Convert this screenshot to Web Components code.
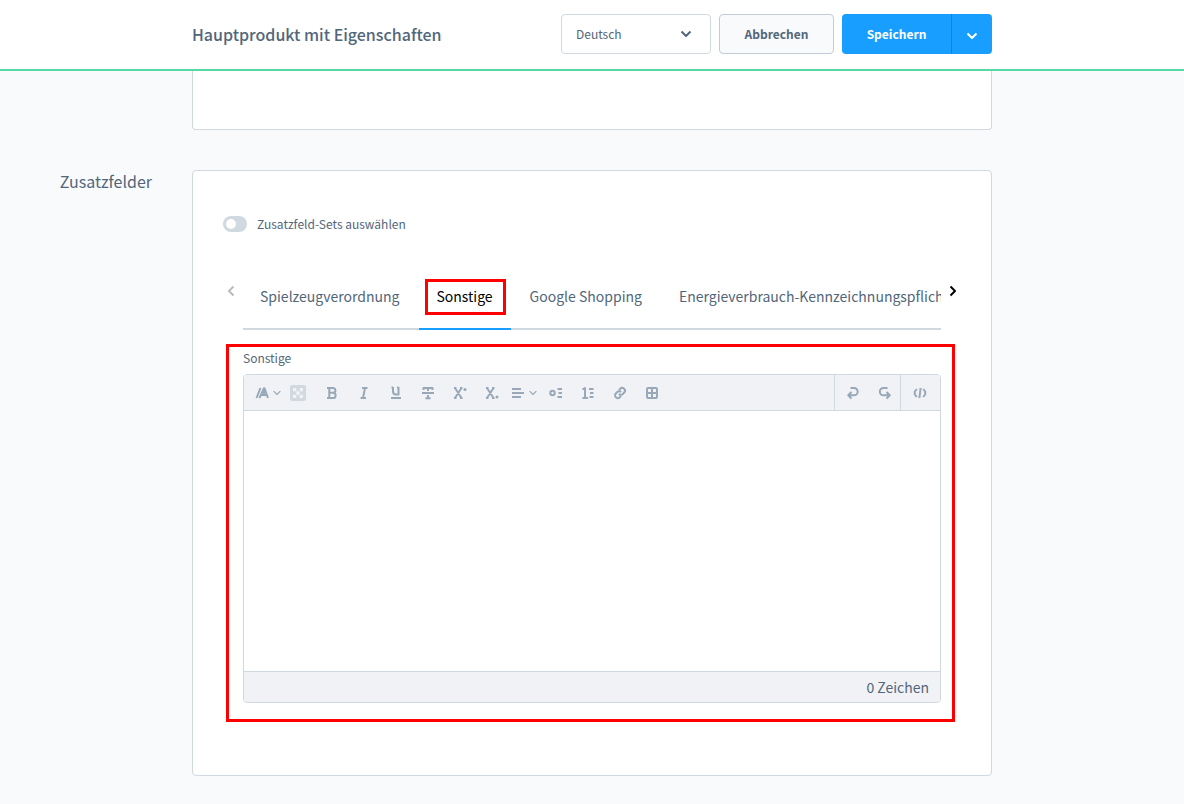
<!DOCTYPE html>
<html lang="de">
<head>
<meta charset="utf-8">
<title>Hauptprodukt mit Eigenschaften</title>
<style>
  body {
    margin: 0;
    min-height: 100vh;
    background: #f9fafc;
    color: #52667a;
    font: 14px/20px "Noto Sans CJK SC", "Noto Sans", sans-serif;
  }
</style>
</head>
<body>
<product-page></product-page>

<script>
const define = (name, html, setup) => {
  const template = document.createElement('template');
  template.innerHTML = '<style>*{box-sizing:border-box}button,select,textarea,input{font:inherit;color:inherit;margin:0}button{cursor:pointer}svg{display:block}</style>' + html;
  customElements.define(name, class extends HTMLElement {
    constructor() {
      super();
      const root = this.attachShadow({ mode: 'open' });
      root.append(template.content.cloneNode(true));
      if (setup) setup.call(this, root);
    }
  });
};

const icons = {
  font: '<path d="M2.500 13 6.500 3M5.500 13 10 3.200h.500L14 13M7.500 10h5.500M10 3.500V10"/>',
  color: '<g stroke="none" fill="#d1d9e0"><rect width="16" height="16" rx="2"/><path fill="#f0f2f5" d="M3 3h3.300v3.300H3zM9.700 3H13v3.300H9.700zM6.300 6.300h3.400v3.400H6.300zM3 9.700h3.300V13H3zM9.700 9.700H13V13H9.700z"/></g>',
  bold: '<path d="M3 3h6a2.300 2.300 0 0 1 0 4.800H5M9 7.800a2.600 2.600 0 0 1 0 5.200H3M5.300 3v10"/>',
  italic: '<path d="M6 3h5.500M4.500 13H10M9 3 7 13"/>',
  underline: '<path d="M5 2v4.500a3 3 0 0 0 3 3h2.500V2M3.500 2.500H5M9 2.500h1.500M3 13h10"/>',
  strike: '<path d="M3.500 5V3h9v2M8 3v3M2 8h12M8 10v3.500M5.500 13.200h5"/>',
  sup: '<path d="M3 3 9.500 13M9.500 3 3 13M2 3h2.500M8 3h2.500M2 13h2.500M8 13h2.500"/><circle cx="13" cy="4.500" r="1.500" fill="currentColor" stroke="none"/>',
  sub: '<path d="M3 3 9.500 13M9.500 3 3 13M2 3h2.500M8 3h2.500M2 13h2.500M8 13h2.500"/><circle cx="13" cy="12" r="1.500" fill="currentColor" stroke="none"/>',
  align: '<path d="M2 4h9M2 8h12M2 12h9"/>',
  bullets: '<circle cx="4.500" cy="8" r="2.200"/><path d="M9.500 4H14M10.500 8H14M9.500 12H14"/>',
  numbers: '<path d="M2.500 4.500 5 3v10M2.500 13h5.500M9 4h4.500M10 8h3.500M9.500 12h4"/>',
  link: '<path d="m7 5 1.200-1.200a2.500 2.500 0 0 1 4 3.700L10.500 9.200a2.400 2.400 0 0 1-3.500-.400M9 11l-1.200 1.200a2.500 2.500 0 0 1-4-3.700L5.500 6.800a2.400 2.400 0 0 1 3.500.400"/>',
  table: '<rect x="3" y="3" width="10" height="10" rx="1"/><path d="M8 3v10M3 8h10"/>',
  undo: '<path d="M6.500 3H10a3.600 3.600 0 0 1 0 7.300H4.500M7.500 7l-3.300 3.300 3.300 3.300"/>',
  redo: '<path d="M11.500 3H7.500a3.600 3.600 0 0 0 0 7.300H13M10.500 7l3.300 3.300-3.300 3.300"/>',
  code: '<path d="M4.800 4 2.800 6.500v3l2 2.500M11.200 4l2 2.500v3l-2 2.500M8.600 3l-1.200 10"/>',
  down: '<path d="m3.500 5.500 4.500 4.500 4.500-4.500"/>',
  left: '<path d="M10.500 3.500 6 8l4.500 4.500"/>',
  right: '<path d="m5.500 3.500 4.500 4.500-4.500 4.500"/>'
};
const svg = (name, size = 16, width = 2) =>
  `<svg width="${size}" height="${size}" viewBox="0 0 16 16" fill="none" stroke="currentColor" stroke-width="${width}" stroke-linejoin="round" aria-hidden="true">${icons[name]}</svg>`;

define('page-header', `
  <style>
    :host { display: grid; grid-template-columns: minmax(0,1fr) minmax(0,800px) minmax(0,1fr); background: #fff; border-bottom: 2px solid #57d9a3; }
    .bar { grid-column: 2; display: flex; align-items: center; gap: 8px; height: 69px; padding-bottom: 1px; }
    h1 { flex: 1; margin: 0; font-size: 16px; line-height: 24px; font-weight: 500; white-space: nowrap; }
  </style>
  <div class="bar"><h1><slot name="title"></slot></h1><slot></slot></div>`);

define('language-select', `
  <style>
    :host { display: block; position: relative; width: 150px; font-size: 12px; }
    select { appearance: none; display: block; width: 100%; height: 40px; padding: 0 14px; border: 1px solid #d1d9e0; border-radius: 4px; background: #fff; }
    svg { position: absolute; right: 17px; top: 12px; pointer-events: none; }
  </style>
  <select aria-label="Sprache"><option>Deutsch</option><option>English</option></select>${svg('down')}`);

define('action-button', `
  <style>
    :host { display: block; font-size: 12px; font-weight: 700; }
    button { display: block; height: 40px; width: 115px; border: 1px solid #c2ccd6; border-radius: 4px; background: #f9fafc; }
  </style>
  <button type="button"><slot></slot></button>`);

define('split-button', `
  <style>
    :host { display: flex; height: 40px; color: #fff; font-size: 12px; font-weight: 700; }
    button { border: 0; padding: 0; background: #189eff; }
    .main { width: 109px; border-radius: 4px 0 0 4px; }
    .more { width: 41px; display: grid; place-items: center; padding-top: 4px; border-left: 1px solid #0a85e0; border-radius: 0 4px 4px 0; }
  </style>
  <button class="main" type="button"><slot></slot></button><button class="more" type="button" aria-label="Weitere Optionen">${svg('down')}</button>`);

define('form-card', `
  <style>
    :host { display: grid; grid-template-columns: minmax(0,1fr) minmax(0,800px) minmax(0,1fr); margin-bottom: 40px; }
    h2 { margin: 0; padding-right: 40px; text-align: right; font-size: 16px; line-height: 22px; font-weight: 400; }
    .card { min-height: 59px; border: 1px solid #d1d9e0; border-radius: 4px; background: #fff; }
    :host([continued]) .card { border-top: 0; border-radius: 0 0 4px 4px; }
    :host(:not([continued])) .card { padding: 43px 50px 72px; }
  </style>
  <h2><slot name="title"></slot></h2><div class="card"><slot></slot></div>`);

define('toggle-switch', `
  <style>
    :host { display: block; margin-left: -20px; }
    label { display: flex; align-items: center; gap: 10px; font-size: 12px; line-height: 20px; }
    input { appearance: none; width: 24px; height: 16px; padding: 3px; border-radius: 8px; background: #d1d9e0; }
    input::before { content: ""; display: block; width: 10px; height: 10px; border-radius: 50%; background: #fff; }
    input:checked { background: #189eff; }
    input:checked::before { margin-left: auto; }
  </style>
  <label><input type="checkbox"><slot></slot></label>`);

define('tab-item', `
  <style>
    :host { display: block; flex: none; margin-bottom: -2px; }
    button { position: relative; height: 66px; padding: 0 18px 0 17px; border: 0; border-bottom: 2px solid transparent; background: none; font-size: 14px; white-space: nowrap; }
    :host([active]) button { color: #000; border-color: #189eff; }
    :host([active]) button::after { content: ""; position: absolute; inset: 15px 5px 13px 6px; border: 3px solid #f00; }
  </style>
  <button type="button" role="tab"><slot></slot></button>`, function (root) {
    root.querySelector('button').setAttribute('aria-selected', this.hasAttribute('active'));
  });

define('tab-bar', `
  <style>
    :host { display: block; position: relative; margin-top: 30px; }
    .tabs { display: flex; gap: 2px; overflow: hidden; box-shadow: inset 0 -2px #d1d9e0; padding-bottom: 2px; }
    .arrow { position: absolute; top: 19px; width: 16px; height: 16px; padding: 0; border: 0; background: none; color: #000; }
    .back { left: -20px; color: #bbb; }
    .next { right: -20px; }
  </style>
  <div class="tabs" role="tablist"><slot></slot></div>
  <button class="arrow back" type="button" aria-label="Zurück">${svg('left')}</button>
  <button class="arrow next" type="button" aria-label="Weiter">${svg('right')}</button>`);

define('tool-button', `
  <style>
    :host { display: block; }
    button { display: flex; align-items: center; justify-content: center; width: 32px; height: 35px; padding: 0; border: 0; background: none; color: #98a8b8; }
    :host([menu]) button { justify-content: space-between; padding: 0 1px 0 2px; }
    :host([icon="color"]) button { justify-content: flex-start; padding-left: 6px; }
  </style>
  <button type="button"></button>`, function (root) {
    const button = root.querySelector('button');
    button.setAttribute('aria-label', this.getAttribute('label'));
    button.innerHTML = svg(this.getAttribute('icon')) + (this.hasAttribute('menu') ? svg('down', 12, 1.5) : '');
  });

define('text-editor', `
  <style>
    :host { display: block; position: relative; margin-top: 18px; }
    :host::after { content: ""; position: absolute; inset: -4px -14px -19px -17px; border: 3px solid #f00; pointer-events: none; }
    label { display: block; font-size: 12px; line-height: 20px; margin-bottom: 6px; }
    .editor { border: 1px solid #d1d9e0; border-radius: 4px; overflow: hidden; }
    .toolbar { display: flex; height: 36px; padding-left: 8px; background: #f0f2f5; border-bottom: 1px solid #d1d9e0; }
    .group { display: flex; padding-left: 1px; border-left: 1px solid #d1d9e0; }
    .group:first-of-type { margin-left: auto; }
    .code { padding: 0 4px 0 3px; }
    textarea { display: block; width: 100%; height: 260px; padding: 12px; border: 0; resize: none; outline: 0; background: #fff; }
    .count { height: 31px; padding: 0 11px; border-top: 1px solid #d1d9e0; background: #f0f2f5; text-align: right; line-height: 30px; }
  </style>
  <label for="text"><slot></slot></label>
  <div class="editor">
    <div class="toolbar" role="toolbar" aria-label="Formatierung">
      <tool-button icon="font" label="Schrift" menu></tool-button>
      <tool-button icon="color" label="Farbe"></tool-button>
      <tool-button icon="bold" label="Fett"></tool-button>
      <tool-button icon="italic" label="Kursiv"></tool-button>
      <tool-button icon="underline" label="Unterstrichen"></tool-button>
      <tool-button icon="strike" label="Durchgestrichen"></tool-button>
      <tool-button icon="sup" label="Hochgestellt"></tool-button>
      <tool-button icon="sub" label="Tiefgestellt"></tool-button>
      <tool-button icon="align" label="Ausrichtung" menu></tool-button>
      <tool-button icon="bullets" label="Liste"></tool-button>
      <tool-button icon="numbers" label="Nummerierung"></tool-button>
      <tool-button icon="link" label="Link"></tool-button>
      <tool-button icon="table" label="Tabelle"></tool-button>
      <div class="group">
        <tool-button icon="undo" label="Rückgängig"></tool-button>
        <tool-button icon="redo" label="Wiederholen"></tool-button>
      </div>
      <div class="group code"><tool-button icon="code" label="Quelltext"></tool-button></div>
    </div>
    <textarea id="text"></textarea>
    <div class="count">0 Zeichen</div>
  </div>`);

define('product-page', `
  <style>:host { display: block; overflow: hidden; } form-card:last-of-type { margin-bottom: 28px; }</style>
  <page-header>
    <span slot="title">Hauptprodukt mit Eigenschaften</span>
    <language-select></language-select>
    <action-button>Abbrechen</action-button>
    <split-button>Speichern</split-button>
  </page-header>
  <main>
    <form-card continued></form-card>
    <form-card>
      <span slot="title">Zusatzfelder</span>
      <toggle-switch>Zusatzfeld-Sets auswählen</toggle-switch>
      <tab-bar>
        <tab-item>Spielzeugverordnung</tab-item>
        <tab-item active>Sonstige</tab-item>
        <tab-item>Google Shopping</tab-item>
        <tab-item>Energieverbrauch-Kennzeichnungspflicht</tab-item>
      </tab-bar>
      <text-editor>Sonstige</text-editor>
    </form-card>
  </main>`);
</script>
</body>
</html>
